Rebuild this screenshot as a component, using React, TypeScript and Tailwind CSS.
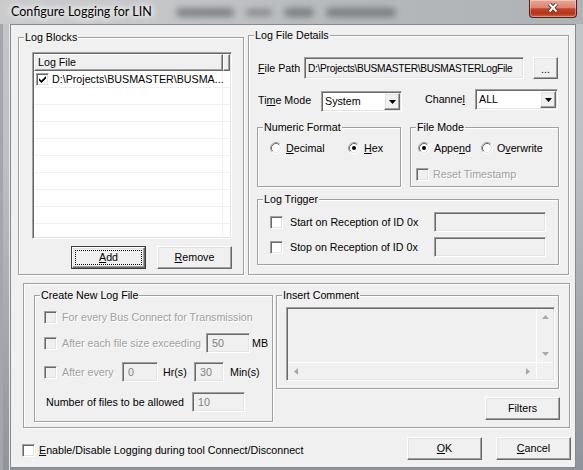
import React from "react";

const etched = "border border-[#a0a0a0] shadow-[inset_1px_1px_0_#ffffff,1px_1px_0_#ffffff]";
const sunken =
  "border border-t-[#a0a0a0] border-l-[#a0a0a0] border-b-white border-r-white shadow-[inset_1px_1px_0_#696969,inset_-1px_-1px_0_#e3e3e3]";
const raised =
  "border border-t-white border-l-white border-b-[#696969] border-r-[#696969] shadow-[inset_-1px_-1px_0_#a0a0a0,inset_1px_1px_0_#e3e3e3]";
const grayText = "text-[#a0a0a0] [text-shadow:1px_1px_0_#ffffff]";

const U = ({ c }: { c: string }) => <span className="underline underline-offset-[1px]">{c}</span>;

function Group({ label, className = "", children }: { label?: string; className?: string; children?: React.ReactNode }) {
  return (
    <div className={`flex flex-col shrink-0 ${etched} ${className}`}>
      {label && (
        <span className="self-start -mt-[7px] -mb-[6px] ml-[5px] px-[1px] h-[13px] leading-[13px] bg-[#f0f0f0] whitespace-nowrap">
          {label}
        </span>
      )}
      {children}
    </div>
  );
}

function Check({ checked = false, disabled = false }: { checked?: boolean; disabled?: boolean }) {
  return (
    <span
      className={`w-[13px] h-[13px] shrink-0 flex items-center justify-center ${sunken} ${
        disabled ? "bg-[#f0f0f0]" : "bg-white"
      }`}
    >
      {checked && (
        <svg width="7" height="7" viewBox="0 0 7 7">
          <path d="M0 2.2 L2.4 4.6 L7 0 L7 2.4 L2.4 7 L0 4.6 Z" fill="#000" />
        </svg>
      )}
    </span>
  );
}

function Radio({ on = false }: { on?: boolean }) {
  return (
    <svg width="12" height="12" viewBox="0 0 12 12" className="shrink-0">
      <circle cx="6" cy="6" r="5" fill="#fff" />
      <path d="M2.11 9.89 A5.5 5.5 0 0 1 9.89 2.11" fill="none" stroke="#a0a0a0" />
      <path d="M2.82 9.18 A4.5 4.5 0 0 1 9.18 2.82" fill="none" stroke="#696969" />
      <path d="M9.89 2.11 A5.5 5.5 0 0 1 2.11 9.89" fill="none" stroke="#fff" />
      <path d="M9.18 2.82 A4.5 4.5 0 0 1 2.82 9.18" fill="none" stroke="#e3e3e3" />
      {on && <circle cx="6" cy="6" r="2" fill="#000" />}
    </svg>
  );
}

function Edit({ className = "", text = "", textClass = "" }: { className?: string; text?: string; textClass?: string }) {
  return (
    <div className={`${sunken} shrink-0 flex items-center overflow-hidden whitespace-nowrap ${className}`}>
      <span className={textClass}>{text}</span>
    </div>
  );
}

function Btn({ children, className = "" }: { children?: React.ReactNode; className?: string }) {
  return <div className={`${raised} bg-[#f0f0f0] shrink-0 flex items-center justify-center ${className}`}>{children}</div>;
}

function Combo({ value, className = "" }: { value: string; className?: string }) {
  return (
    <div className={`${sunken} bg-white shrink-0 flex items-center pl-[3px] pr-[1px] ${className}`}>
      <span className="flex-1">{value}</span>
      <span className={`${raised} bg-[#f0f0f0] w-[16px] h-[17px] flex items-center justify-center`}>
        <svg width="7" height="4" viewBox="0 0 7 4">
          <path d="M0 0H7L3.5 4Z" fill="#000" />
        </svg>
      </span>
    </div>
  );
}

const Arrow = ({ dir }: { dir: "up" | "down" | "left" | "right" }) => {
  const d = {
    up: "M3.5 0L7 4H0Z",
    down: "M0 0H7L3.5 4Z",
    left: "M0 3.5L4 0V7Z",
    right: "M0 0L4 3.5L0 7Z",
  }[dir];
  const v = dir === "up" || dir === "down";
  return (
    <svg width={v ? 7 : 4} height={v ? 4 : 7} viewBox={v ? "0 0 7 4" : "0 0 4 7"}>
      <path d={d} fill="#a8a8a8" />
    </svg>
  );
};

export default function App() {
  const hdr =
    "border border-t-white border-l-white border-b-[#696969] border-r-[#696969] shadow-[inset_-1px_-1px_0_#a0a0a0] bg-[#f0f0f0]";

  return (
    <div className="w-[583px] h-[470px] overflow-hidden flex flex-col text-[10.7px] leading-[13px] text-black font-['Liberation_Sans',Arial,sans-serif] bg-[linear-gradient(180deg,#c3c6c9_0%,#bcc0c4_35%,#8f949a_100%)]">
      {/* title bar */}
      <div className="h-[24px] shrink-0 flex items-start bg-[linear-gradient(90deg,#c9cbcd_0%,#c5c7c9_25%,#b5b8bb_60%,#b0b3b6_100%)]">
        <span className="ml-[11px] mt-[4px] text-[12.5px] leading-[15px] font-['Lato',sans-serif] whitespace-nowrap [text-shadow:0_0_5px_#fff,0_0_9px_#fff,0_0_12px_#fff]">
          Configure Logging for LIN
        </span>
        <div className="ml-[24px] mt-[8px] flex items-center gap-[12px] opacity-60">
          <span className="w-[58px] h-[9px] rounded-full bg-[#55595d] blur-[3px]" />
          <span className="w-[26px] h-[7px] rounded-full bg-[#65696d] blur-[3px]" />
          <span className="w-[30px] h-[9px] rounded-full bg-[#55595d] blur-[3px]" />
          <span className="w-[70px] h-[9px] rounded-full bg-[#55595d] blur-[3px]" />
        </div>
        <div className="ml-auto mr-[6px] w-[48px] h-[18px] rounded-b-[4px] border border-t-0 border-[#5b1b12] bg-[linear-gradient(180deg,#e7a898_0%,#d98572_45%,#c4432a_52%,#b8341c_80%,#d0683a_100%)] shadow-[inset_0_0_0_1px_rgba(255,255,255,0.35)] flex items-start justify-center pt-[2px]">
          <svg width="14" height="12" viewBox="0 0 14 12">
            <path d="M3.5 2L10.5 9.5M10.5 2L3.5 9.5" stroke="#4a2620" strokeWidth="4" />
            <path d="M3.5 2L10.5 9.5M10.5 2L3.5 9.5" stroke="#fff" strokeWidth="2.2" />
          </svg>
        </div>
      </div>

      <div className="flex flex-1">
        <div className="w-[10px] shrink-0 border-l-[3px] border-l-[#a3a7ab] border-r border-r-[#e6e8ea]" />

        {/* client area */}
        <div className="w-[566px] h-[444px] shrink-0 bg-[#f0f0f0] border border-[#868b91] flex flex-col">
          {/* top row */}
          <div className="flex items-start pl-[7px] shrink-0">
            <Group label="Log Blocks" className="mt-[12px] w-[226px] h-[238px]">
              <div className={`${sunken} bg-white mt-[14px] ml-[13px] w-[200px] h-[187px] p-[1px] flex flex-col overflow-hidden`}>
                <div className="flex h-[17px] shrink-0">
                  <div className={`w-[189px] ${hdr} pl-[3px] flex items-center`}>Log File</div>
                  <div className={`flex-1 ${hdr}`} />
                </div>
                {Array.from({ length: 10 }).map((_, i) => (
                  <div key={i} className="flex h-[17px] shrink-0 border-b border-[#f0f0f0]">
                    <div className="w-[189px] shrink-0 border-r border-[#f0f0f0] flex items-center">
                      {i === 0 && (
                        <>
                          <span className="ml-[2px]">
                            <Check checked />
                          </span>
                          <span className="ml-[3px] whitespace-nowrap">{"D:\\Projects\\BUSMASTER\\BUSMA..."}</span>
                        </>
                      )}
                    </div>
                  </div>
                ))}
              </div>
              <div className="flex items-start mt-[7px] ml-[52px]">
                <div className="w-[75px] h-[23px] border border-[#3c3c3c] shrink-0">
                  <div className={`${raised} bg-[#f0f0f0] w-full h-full p-[2px]`}>
                    <div className="w-full h-full border border-dotted border-black flex items-center justify-center">
                      <U c="A" />
                      dd
                    </div>
                  </div>
                </div>
                <Btn className="ml-[11px] w-[75px] h-[23px]">
                  <U c="R" />
                  emove
                </Btn>
              </div>
            </Group>

            <Group label="Log File Details" className="ml-[4px] mt-[10px] w-[321px] h-[240px]">
              <div className="flex items-center mt-[21px] pl-[9px] h-[22px]">
                <span className="w-[46px] shrink-0">
                  <U c="F" />
                  ile Path
                </span>
                <Edit
                  className="w-[220px] h-[22px] bg-[#f0f0f0] pl-[3px]"
                  textClass="text-[10.2px] tracking-[-0.3px]"
                  text={"D:\\Projects\\BUSMASTER\\BUSMASTERLogFile"}
                />
                <Btn className="ml-[9px] w-[25px] h-[22px]">
                  <span className="mt-[2px]">...</span>
                </Btn>
              </div>

              <div className="flex items-start mt-[10px] pl-[9px] h-[23px]">
                <span className="w-[63px] h-[21px] mt-[1px] shrink-0 flex items-center">
                  Ti
                  <U c="m" />e Mode
                </span>
                <Combo value="System" className="w-[81px] h-[21px] mt-[2px]" />
                <span className="ml-[23px] w-[50px] h-[21px] shrink-0 flex items-center">
                  Channe
                  <U c="l" />
                </span>
                <Combo value="ALL" className="w-[83px] h-[21px]" />
              </div>

              <div className="flex items-start mt-[15px] pl-[8px]">
                <Group label="Numeric Format" className="w-[144px] h-[60px]">
                  <div className="flex items-center mt-[14px] pl-[12px] h-[12px]">
                    <span className="w-[78px] flex items-center gap-[4px]">
                      <Radio />
                      <span>
                        <U c="D" />
                        ecimal
                      </span>
                    </span>
                    <span className="flex items-center gap-[4px]">
                      <Radio on />
                      <span>
                        <U c="H" />
                        ex
                      </span>
                    </span>
                  </div>
                </Group>
                <Group label="File Mode" className="ml-[9px] w-[149px] h-[60px]">
                  <div className="flex items-center mt-[14px] pl-[7px] h-[12px]">
                    <span className="w-[63px] flex items-center gap-[4px]">
                      <Radio on />
                      <span>
                        Appe
                        <U c="n" />d
                      </span>
                    </span>
                    <span className="flex items-center gap-[4px]">
                      <Radio />
                      <span>
                        O<U c="v" />
                        erwrite
                      </span>
                    </span>
                  </div>
                  <div className="flex items-center mt-[14px] pl-[5px] h-[13px]">
                    <Check disabled />
                    <span className={`ml-[4px] whitespace-nowrap ${grayText}`}>Reset Timestamp</span>
                  </div>
                </Group>
              </div>

              <Group label="Log Trigger" className="mt-[12px] ml-[8px] w-[302px] h-[66px]">
                <div className="flex items-center mt-[12px] pl-[12px] h-[20px]">
                  <Check />
                  <span className="ml-[7px] w-[144px] shrink-0 whitespace-nowrap">Start on Reception of ID 0x</span>
                  <Edit className="w-[112px] h-[20px] bg-[#f0f0f0]" />
                </div>
                <div className="flex items-center mt-[5px] pl-[12px] h-[20px]">
                  <Check />
                  <span className="ml-[7px] w-[144px] shrink-0 whitespace-nowrap">Stop on Reception of ID 0x</span>
                  <Edit className="w-[112px] h-[20px] bg-[#f0f0f0]" />
                </div>
              </Group>
            </Group>
          </div>

          {/* lower frame */}
          <div className={`${etched} mt-[8px] ml-[12px] w-[547px] h-[145px] shrink-0 flex items-start`}>
            <Group label="Create New Log File" className="ml-[10px] mt-[11px] w-[239px] h-[127px]">
              <div className="flex items-center mt-[11px] pl-[9px] h-[20px]">
                <Check disabled />
                <span className={`ml-[5px] whitespace-nowrap ${grayText}`}>For every Bus Connect for Transmission</span>
              </div>
              <div className="flex items-center mt-[6px] pl-[9px] h-[20px]">
                <Check disabled />
                <span className={`ml-[5px] w-[144px] shrink-0 whitespace-nowrap ${grayText}`}>After each file size exceeding</span>
                <Edit className="w-[44px] h-[20px] bg-[#f0f0f0] pl-[5px]" text="50" textClass="text-[#808080]" />
                <span className="ml-[2px]">MB</span>
              </div>
              <div className="flex items-center mt-[9px] pl-[9px] h-[20px]">
                <Check disabled />
                <span className={`ml-[5px] w-[60px] shrink-0 whitespace-nowrap ${grayText}`}>After every</span>
                <Edit className="w-[36px] h-[20px] bg-[#f0f0f0] pl-[5px]" text="0" textClass="text-[#808080]" />
                <span className="ml-[5px] w-[31px] shrink-0">Hr(s)</span>
                <Edit className="w-[30px] h-[20px] bg-[#f0f0f0] pl-[5px]" text="30" textClass="text-[#808080]" />
                <span className="ml-[6px]">Min(s)</span>
              </div>
              <div className="flex items-center mt-[10px] pl-[11px] h-[20px]">
                <span className="w-[146px] shrink-0 whitespace-nowrap">Number of files to be allowed</span>
                <Edit className="w-[53px] h-[20px] bg-[#f0f0f0] pl-[5px]" text="10" textClass="text-[#808080]" />
              </div>
            </Group>

            <div className="ml-[3px] mt-[11px] flex flex-col">
              <Group label="Insert Comment" className="w-[283px] h-[94px]">
                <div className={`${sunken} mt-[11px] ml-[9px] w-[269px] h-[74px] p-[1px] bg-[#f0f0f0] flex flex-col`}>
                  <div className="flex flex-1">
                    <div className="flex-1" />
                    <div className="w-[17px] border-l border-white flex flex-col items-center justify-between py-[6px]">
                      <Arrow dir="up" />
                      <Arrow dir="down" />
                    </div>
                  </div>
                  <div className="flex h-[17px] shrink-0 border-t border-white">
                    <div className="flex-1 flex items-center justify-between px-[6px]">
                      <Arrow dir="left" />
                      <Arrow dir="right" />
                    </div>
                    <div className="w-[17px] border-l border-white" />
                  </div>
                </div>
              </Group>
              <Btn className="mt-[8px] ml-[209px] w-[75px] h-[23px]">Filters</Btn>
            </div>
          </div>

          {/* bottom row */}
          <div className="flex items-start mt-[9px] pl-[11px] pr-[4px]">
            <div className="flex items-center mt-[7px] h-[13px]">
              <Check />
              <span className="ml-[4px] whitespace-nowrap">
                <U c="E" />
                nable/Disable Logging during tool Connect/Disconnect
              </span>
            </div>
            <Btn className="ml-auto w-[75px] h-[23px]">
              <U c="O" />K
            </Btn>
            <Btn className="ml-[14px] w-[75px] h-[23px]">
              <U c="C" />
              ancel
            </Btn>
          </div>
        </div>

        <div className="flex-1" />
      </div>
    </div>
  );
}
